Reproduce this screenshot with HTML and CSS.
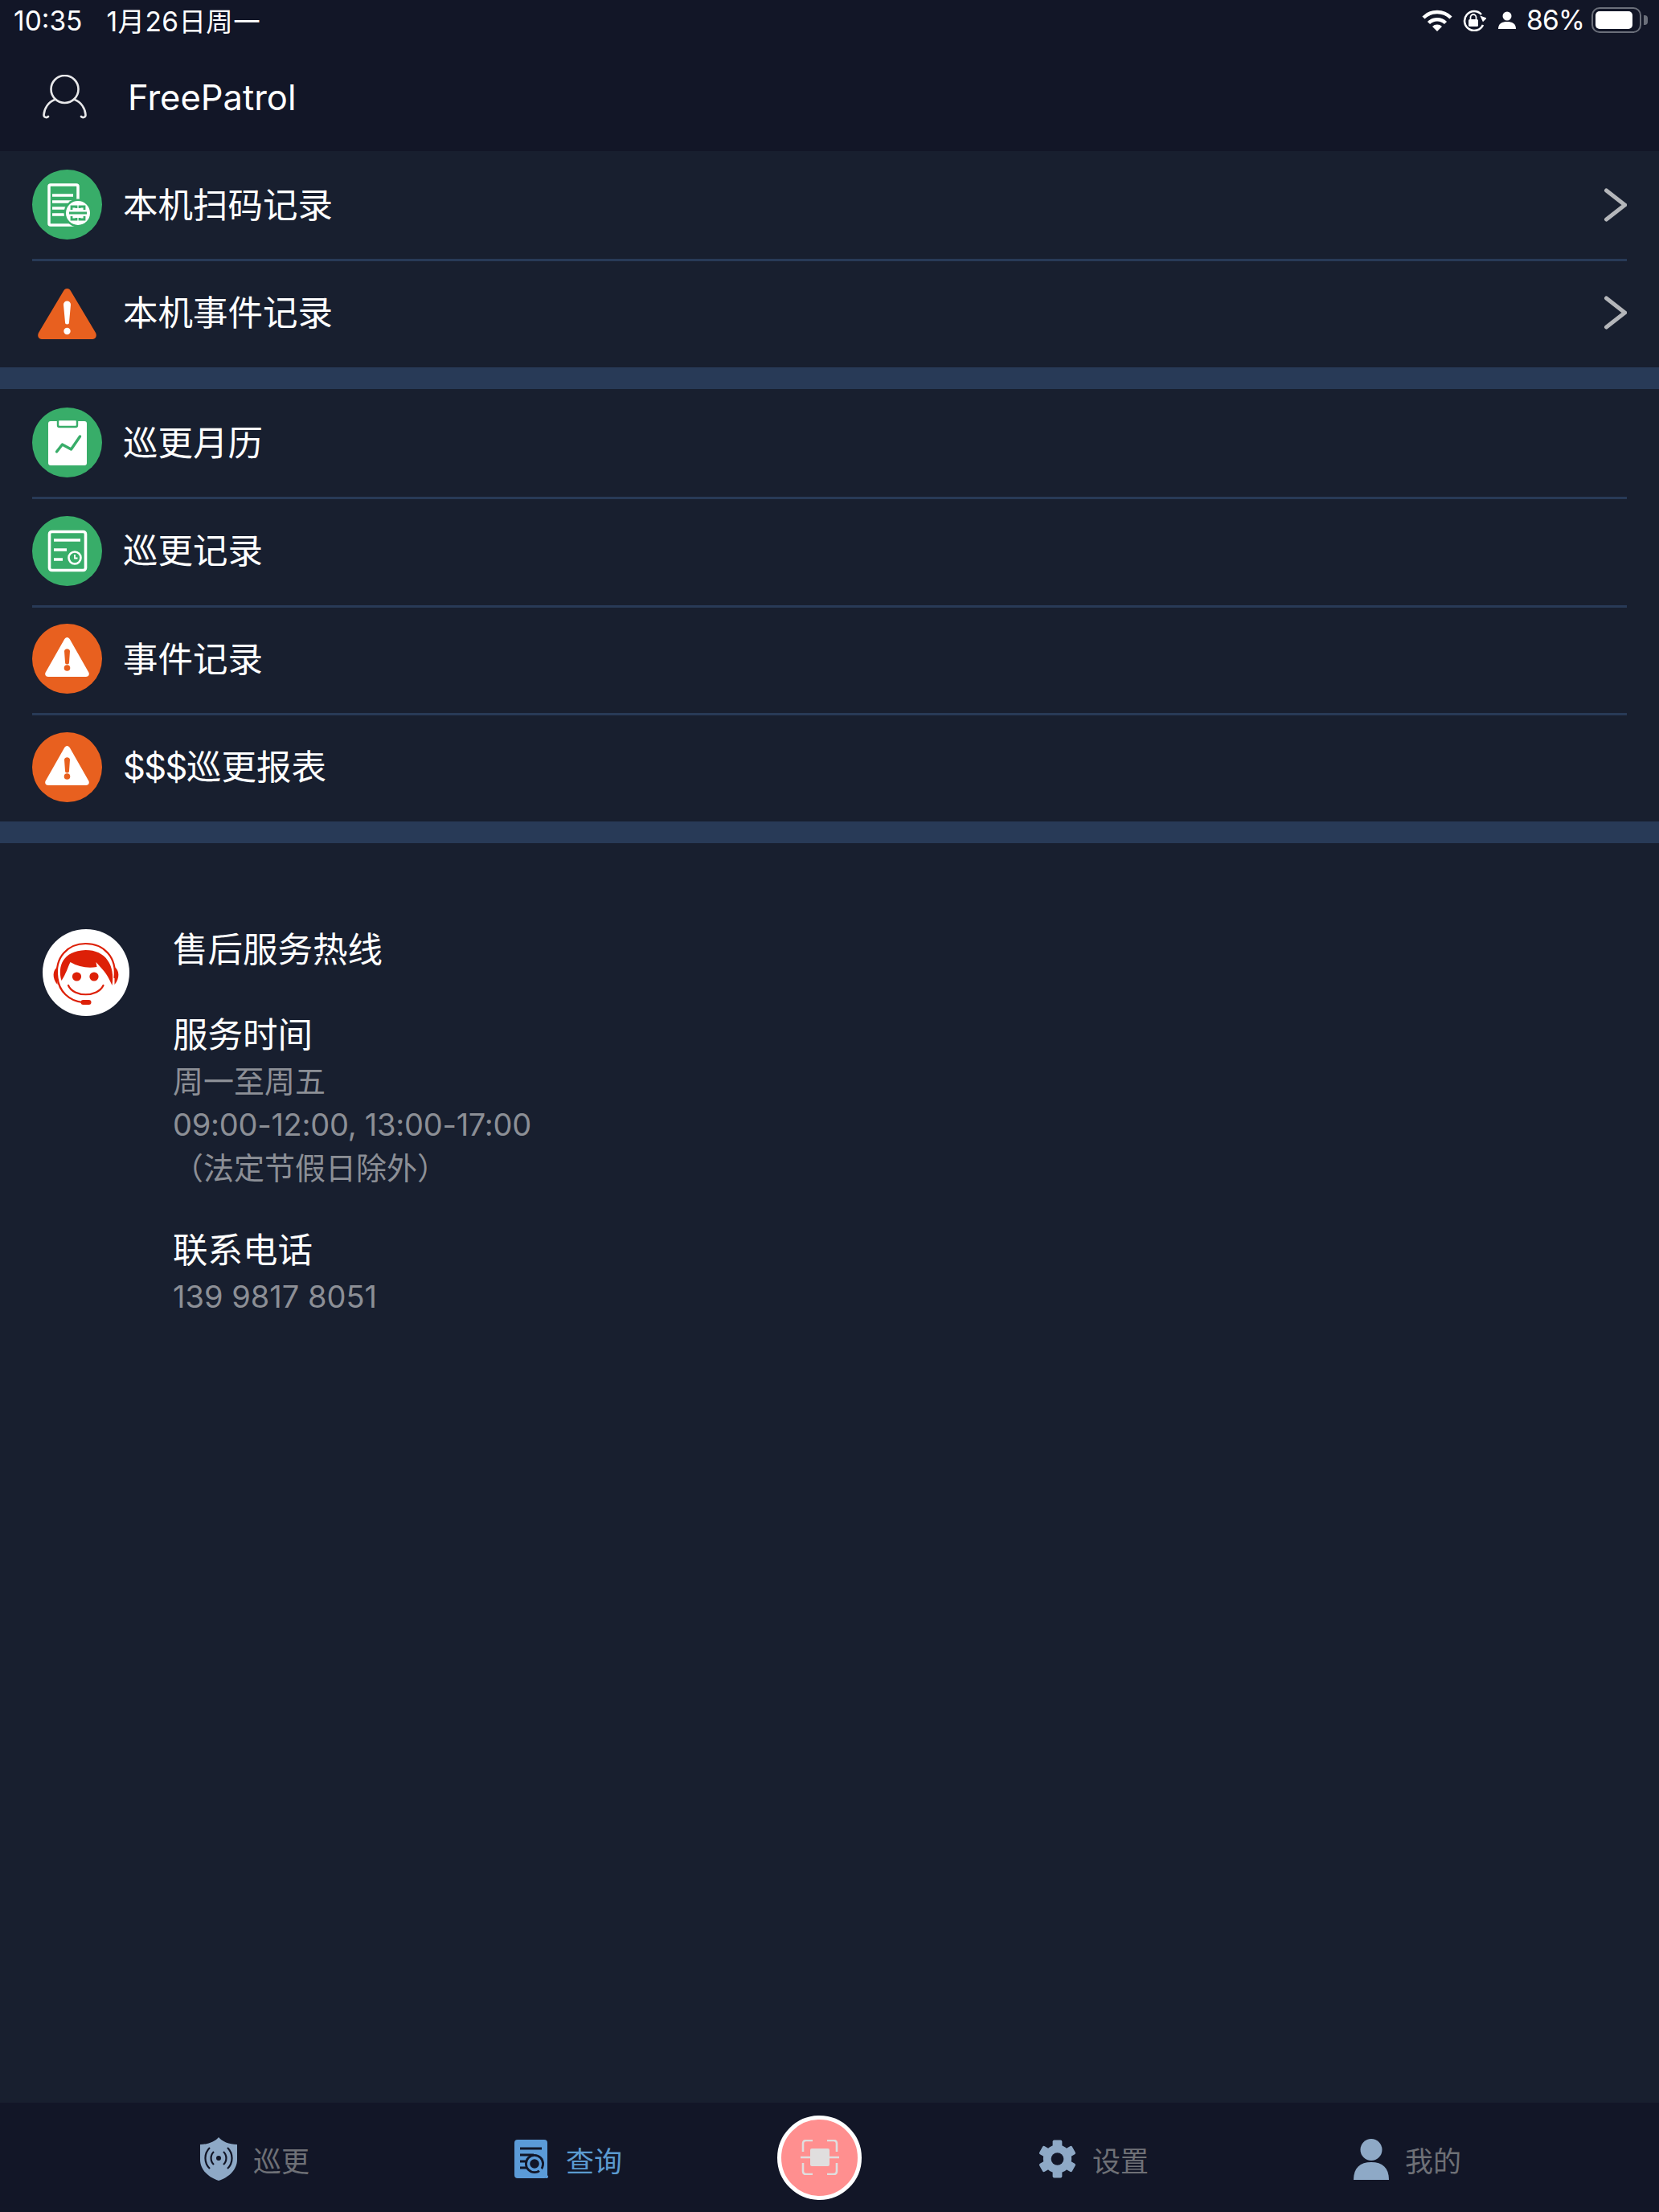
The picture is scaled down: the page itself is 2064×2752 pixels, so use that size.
FILE: index.html
```html
<!DOCTYPE html>
<html lang="zh-CN">
<head>
  <meta charset="UTF-8">
  <title>FreePatrol</title>
  <link rel="stylesheet" href="styles.css">
</head>
<body>
<div class="page">

  <header class="top">
    <div class="status">
      <span class="status-time">10:35</span>
      <span class="status-date">1月26日周一</span>
      <div class="status-right">
        <svg class="st-wifi" viewBox="0 0 38 27" width="38" height="27">
          <path d="M2 10 A24 24 0 0 1 36 10" fill="none" stroke="#fff" stroke-width="4.5"/>
          <path d="M8.5 16.5 A15 15 0 0 1 29.5 16.5" fill="none" stroke="#fff" stroke-width="4.5"/>
          <path d="M13 21 A8.5 8.5 0 0 1 25 21 L19 27 Z" fill="#fff"/>
        </svg>
        <svg class="st-lock" viewBox="0 0 30 27" width="30" height="27">
          <path d="M24 6 A12 12 0 1 0 26 19" fill="none" stroke="#fff" stroke-width="2.6"/>
          <path d="M21 9 L30 9 L27 15 Z" fill="#fff" transform="rotate(20 26 12)"/>
          <rect x="8" y="12" width="12" height="9" rx="1.5" fill="#fff"/>
          <path d="M10.5 12 V9.5 A3.5 3.5 0 0 1 17.5 9.5 V12" fill="none" stroke="#fff" stroke-width="1.8"/>
        </svg>
        <svg class="st-user" viewBox="0 0 22 22" width="22" height="22">
          <circle cx="11" cy="6" r="5.5" fill="#fff"/>
          <path d="M0 22 C0 15 5 13 11 13 C17 13 22 15 22 22 Z" fill="#fff"/>
        </svg>
        <span class="status-pct">86%</span>
        <div class="battery"><div class="battery-fill"></div></div>
        <div class="battery-nub"></div>
      </div>
    </div>
    <div class="top-user">
      <svg class="top-user-icon" viewBox="0 0 55 55" width="55" height="55">
        <circle cx="27.5" cy="18" r="17" fill="none" stroke="#e8e8ea" stroke-width="2.6"/>
        <path d="M15 31 C7 34 2 42 1.5 50 C1.5 53 5 54 7 52 M40 31 C48 34 53 42 53.5 50 C53.5 53 50 54 48 52" fill="none" stroke="#e8e8ea" stroke-width="2.6" stroke-linecap="round"/>
      </svg>
      <span class="top-user-name">FreePatrol</span>
    </div>
  </header>

  <main class="content">
    <ul class="menu">
      <li class="menu-row">
        <svg class="menu-icon" viewBox="0 0 87 87" width="87" height="87">
          <circle cx="43.5" cy="43.5" r="43.5" fill="#38ad69"/>
          <rect x="21" y="19" width="36" height="50" rx="2" fill="none" stroke="#fff" stroke-width="3.5"/>
          <path d="M25 32 H51 M25 40 H51 M25 48 H45 M25 56 H45" stroke="#fff" stroke-width="3.5"/>
          <circle cx="57" cy="54" r="17.5" fill="#38ad69"/>
          <circle cx="57" cy="54" r="15" fill="#fff"/>
          <path d="M49 50 V46 H55 V48 M65 50 V46 H59 V48 M49 58 V62 H55 V60 M65 58 V62 H59 V60 M46 54 H68" fill="none" stroke="#38ad69" stroke-width="2.8"/>
        </svg>
        <span class="menu-label">本机扫码记录</span>
        <svg class="chevron" viewBox="0 0 30 44" width="30" height="44"><path d="M4.5 4 L27.5 22 L4.5 40" fill="none" stroke="#b4b6ba" stroke-width="5" stroke-linecap="round"/></svg>
      </li>
      <li class="menu-row">
        <svg class="menu-icon" viewBox="0 0 87 87" width="87" height="87">
          <path d="M43.5 13 C45.5 13 47 14 48 16 L79 68 C81 72 79 76 75 76 H12 C8 76 6 72 8 68 L39 16 C40 14 41.5 13 43.5 13 Z" fill="#e8601f"/>
          <path d="M39 33 A4.5 4.5 0 0 1 48 33 L46 55 A2.5 2.5 0 0 1 41 55 Z" fill="#fff"/>
          <circle cx="43.5" cy="66" r="4.2" fill="#fff"/>
        </svg>
        <span class="menu-label">本机事件记录</span>
        <svg class="chevron" viewBox="0 0 30 44" width="30" height="44"><path d="M4.5 4 L27.5 22 L4.5 40" fill="none" stroke="#b4b6ba" stroke-width="5" stroke-linecap="round"/></svg>
      </li>
    </ul>

    <div class="band"></div>

    <ul class="menu">
      <li class="menu-row">
        <svg class="menu-icon" viewBox="0 0 87 87" width="87" height="87">
          <circle cx="43.5" cy="43.5" r="43.5" fill="#38ad69"/>
          <rect x="20" y="17" width="48" height="55" rx="3" fill="#fff"/>
          <rect x="32" y="15" width="24" height="9" rx="2" fill="#fff" stroke="#38ad69" stroke-width="2.4"/>
          <path d="M30.5 55 L37.5 46 L48.5 52 L59.5 36" fill="none" stroke="#38ad69" stroke-width="3.4" stroke-linecap="round" stroke-linejoin="round"/>
        </svg>
        <span class="menu-label">巡更月历</span>
      </li>
      <li class="menu-row">
        <svg class="menu-icon" viewBox="0 0 87 87" width="87" height="87">
          <circle cx="43.5" cy="43.5" r="43.5" fill="#38ad69"/>
          <rect x="21.5" y="19.5" width="45" height="48" rx="3" fill="none" stroke="#fff" stroke-width="3.6"/>
          <path d="M27 30 H60 M27 42 H43 M27 54 H38" stroke="#fff" stroke-width="3.4"/>
          <circle cx="53" cy="52" r="7.5" fill="none" stroke="#fff" stroke-width="2.6"/>
          <path d="M53 48 V52.5 H56.5" fill="none" stroke="#fff" stroke-width="1.8"/>
        </svg>
        <span class="menu-label">巡更记录</span>
      </li>
      <li class="menu-row">
        <svg class="menu-icon" viewBox="0 0 87 87" width="87" height="87">
          <circle cx="43.5" cy="43.5" r="43.5" fill="#e8601f"/>
          <path d="M43.5 17 C45 17 46 18 47 19.5 L70 60 C72 63 70 66 67 66 H20 C17 66 15 63 17 60 L40 19.5 C41 18 42 17 43.5 17 Z" fill="#fff"/>
          <path d="M40 34 A3.6 3.6 0 0 1 47 34 L46 48 A2.5 2.5 0 0 1 41 48 Z" fill="#e8601f"/>
          <circle cx="43.5" cy="55" r="3.8" fill="#e8601f"/>
        </svg>
        <span class="menu-label">事件记录</span>
      </li>
      <li class="menu-row">
        <svg class="menu-icon" viewBox="0 0 87 87" width="87" height="87">
          <circle cx="43.5" cy="43.5" r="43.5" fill="#e8601f"/>
          <path d="M43.5 17 C45 17 46 18 47 19.5 L70 60 C72 63 70 66 67 66 H20 C17 66 15 63 17 60 L40 19.5 C41 18 42 17 43.5 17 Z" fill="#fff"/>
          <path d="M40 34 A3.6 3.6 0 0 1 47 34 L46 48 A2.5 2.5 0 0 1 41 48 Z" fill="#e8601f"/>
          <circle cx="43.5" cy="55" r="3.8" fill="#e8601f"/>
        </svg>
        <span class="menu-label"><span class="money">$$$</span>巡更报表</span>
      </li>
    </ul>

    <div class="band"></div>

    <section class="contact">
      <svg class="contact-avatar" viewBox="23.5 15 108 108" width="108" height="108">
        <circle cx="77.5" cy="69" r="54" fill="#fff"/>
        <path d="M47 79 C42 62 48 42 77 41 C102 41 114 60 110 85 C107 78 104 72 98 65 L90 56 L91 62 C80 64 68 62 58 56 C55 62 53 70 47 79 Z" fill="#dd2007"/>
        <path d="M73 106 C56 104 44 92 42 76 C38 50 55 33 77 33 C100 33 116 50 113 76" fill="none" stroke="#dd2007" stroke-width="2.2"/>
        <path d="M42 62 C36 66 35 76 42 84 Z M113 62 C119 66 120 76 113 84 Z" fill="#dd2007"/>
        <circle cx="66" cy="74" r="5.6" fill="#dd2007"/>
        <circle cx="87.5" cy="74" r="5.6" fill="#dd2007"/>
        <path d="M55.5 85 C62 100 92 100 99 85" fill="none" stroke="#dd2007" stroke-width="2.2" stroke-linecap="round"/>
        <rect x="71" y="103" width="13" height="6" rx="3" fill="#dd2007"/>
      </svg>
      <div class="contact-body">
        <div class="contact-group">
          <h3 class="contact-title">售后服务热线</h3>
        </div>
        <div class="contact-group">
          <h3 class="contact-title">服务时间</h3>
          <p class="contact-text">周一至周五</p>
          <p class="contact-text contact-hours">09:00-12:00, 13:00-17:00</p>
          <p class="contact-text">（法定节假日除外）</p>
        </div>
        <div class="contact-group">
          <h3 class="contact-title">联系电话</h3>
          <p class="contact-text">139 9817 8051</p>
        </div>
      </div>
    </section>
  </main>

  <nav class="tabbar">
    <div class="tab-group tab-group-left">
      <div class="tab">
        <svg viewBox="0 0 46 54" width="46" height="54">
          <path d="M23 0 C27 5 36 9 46 9 V28 C46 40 36 50 23 54 C10 50 0 40 0 28 V9 C10 9 19 5 23 0 Z" fill="#8ea9c6"/>
          <circle cx="23" cy="26" r="3" fill="#121627"/>
          <path d="M17 18 A11 11 0 0 0 17 34 M29 18 A11 11 0 0 1 29 34 M12 13 A18 18 0 0 0 12 39 M34 13 A18 18 0 0 1 34 39" fill="none" stroke="#121627" stroke-width="2.2"/>
        </svg>
        <span class="tab-label">巡更</span>
      </div>
      <div class="tab tab-active">
        <svg viewBox="0 0 44 48" width="44" height="48">
          <rect x="0" y="0" width="41" height="48" rx="4" fill="#5b9bd8"/>
          <path d="M7 11 H34 M7 19 H24 M7 27 H15 M7 35 H15" stroke="#121627" stroke-width="3"/>
          <circle cx="25" cy="30" r="12" fill="#121627"/>
          <circle cx="25" cy="30" r="7.5" fill="none" stroke="#5b9bd8" stroke-width="3.4"/>
          <path d="M31 36 L40 46" stroke="#5b9bd8" stroke-width="4" stroke-linecap="round"/>
        </svg>
        <span class="tab-label">查询</span>
      </div>
    </div>

    <button class="scan-btn">
      <svg viewBox="0 0 48 44" width="48" height="44">
        <path d="M3 15 V5 Q3 1 7 1 H15 M33 1 H41 Q45 1 45 5 V15 M3 29 V39 Q3 43 7 43 H15 M33 43 H41 Q45 43 45 39 V29 M0 22 H48" fill="none" stroke="#e0dede" stroke-width="2.6"/>
        <rect x="12" y="11" width="24" height="22" rx="2" fill="#e0dede"/>
      </svg>
    </button>

    <div class="tab-group tab-group-right">
      <div class="tab">
        <svg viewBox="0 0 48 48" width="47" height="48">
          <g fill="#8ea9c6">
            <circle cx="24" cy="24" r="18"/>
            <rect x="18" y="0" width="12" height="48" rx="2"/>
            <rect x="18" y="0" width="12" height="48" rx="2" transform="rotate(60 24 24)"/>
            <rect x="18" y="0" width="12" height="48" rx="2" transform="rotate(120 24 24)"/>
          </g>
          <circle cx="24" cy="24" r="8" fill="#121627"/>
        </svg>
        <span class="tab-label">设置</span>
      </div>
      <div class="tab">
        <svg viewBox="0 0 44 51" width="44" height="51">
          <ellipse cx="22" cy="13.5" rx="13.5" ry="13.5" fill="#8ea9c6"/>
          <path d="M0 51 C0 36 8 29 22 29 C36 29 44 36 44 51 Z" fill="#8ea9c6"/>
        </svg>
        <span class="tab-label">我的</span>
      </div>
    </div>
  </nav>

</div>
</body>
</html>
```

FILE: styles.css
```css
* {
  box-sizing: border-box;
}

body {
  margin: 0;
  background-color: #181f2f;
  color: #fff;
  font-family: Inter, "Noto Sans CJK SC", sans-serif;
}

ul {
  list-style: none;
  margin: 0;
  padding: 0;
}

.page {
  display: flex;
  flex-direction: column;
  height: 2752px;
}

/* top bar */
.top {
  height: 188px;
  background-color: #121627;
}

.status {
  display: flex;
  align-items: center;
  height: 52px;
  padding-left: 17px;
  padding-right: 14px;
  font-size: 33.5px;
}

.status-date {
  margin-left: 30px;
  margin-bottom: 4px;
  letter-spacing: 0.4px;
}

.status-right {
  display: flex;
  align-items: center;
  margin-left: auto;
  margin-top: -2px;
}

.st-lock {
  margin-left: 12px;
}

.st-user {
  margin-left: 15px;
}

.status-pct {
  margin-left: 13px;
  letter-spacing: -0.8px;
}

.battery {
  width: 62px;
  height: 32px;
  margin-left: 9px;
  padding: 3px;
  border: 2px solid #6b6f7a;
  border-radius: 10px;
}

.battery-fill {
  width: 46px;
  height: 22px;
  background-color: #fff;
  border-radius: 5px;
}

.battery-nub {
  width: 5px;
  height: 12px;
  margin-left: 3px;
  background-color: #6b6f7a;
  border-radius: 0 4px 4px 0;
}

.top-user {
  display: flex;
  align-items: center;
  height: 136px;
  padding-left: 53px;
}

.top-user-name {
  margin-left: 51px;
  margin-top: 2px;
  font-size: 43.5px;
}

/* list rows */
.content {
  flex: 1;
}

.menu {
  padding-top: 2.5px;
}

.menu-row {
  display: flex;
  align-items: center;
  height: 134.5px;
  margin: 0 40px;
  padding-bottom: 3px;
  border-bottom: 3px solid #283a57;
}

.menu-row:last-child {
  height: 131.5px;
  border-bottom: none;
}

.menu-icon {
  flex-shrink: 0;
}

.menu-label {
  margin-left: 26px;
  margin-bottom: 5px;
  font-size: 43.5px;
}

.money {
  letter-spacing: -1.6px;
}

.chevron {
  margin-left: auto;
}

.band {
  height: 27.5px;
  background-color: #283a57;
}

/* service info */
.contact {
  display: flex;
  padding-top: 105px;
  padding-left: 53px;
}

.contact-avatar {
  flex-shrink: 0;
  margin-top: 2px;
}

.contact-body {
  margin-left: 54px;
}

.contact-group {
  margin-bottom: 48px;
}

.contact-group:first-child {
  margin-bottom: 52px;
}

.contact-title {
  margin: 0 0 4px;
  font-size: 43.5px;
  font-weight: 400;
  line-height: 54px;
}

.contact-text {
  margin: 0;
  color: #8c8f96;
  font-size: 38px;
  line-height: 54px;
}

.contact-hours {
  letter-spacing: -0.25px;
}

/* bottom tabs */
.tabbar {
  display: flex;
  align-items: center;
  height: 136px;
  padding-left: 249px;
  background-color: #121627;
}

.tab-group {
  display: flex;
  align-items: center;
  gap: 255px;
  padding-top: 4px;
}

.tab {
  display: flex;
  align-items: center;
  gap: 20px;
}

.tab-label {
  color: #6e7076;
  font-size: 35px;
}

.tab-active .tab-label {
  color: #5b9bd0;
}

.scan-btn {
  display: flex;
  align-items: center;
  justify-content: center;
  width: 105px;
  height: 105px;
  margin: 0 220px 0 193px;
  padding: 0;
  background-color: #ff8f8f;
  border: 5px solid #fff;
  border-radius: 50%;
}
```
